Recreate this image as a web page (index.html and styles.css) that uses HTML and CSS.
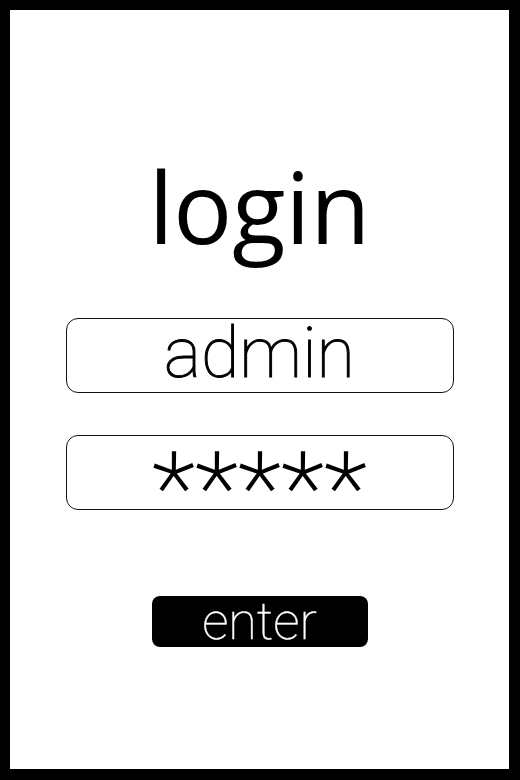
FILE: index.html
```html
<!DOCTYPE html>
<html lang="en">
<head>
    <meta charset="UTF-8">
    <meta name="viewport" content="width=device-width, initial-scale=1.0">
    <title>login</title>
    <link rel="stylesheet" href="styles.css">
</head>
<body>
    <div class="frame">
        <h1 class="title">login</h1>
        <div class="field">admin</div>
        <div class="field field-pass">*****</div>
        <button class="btn-enter">enter</button>
    </div>
</body>
</html>
```

FILE: styles.css
```css
* {
    box-sizing: border-box;
}

body {
    margin: 0;
    padding: 0;
    background-color: #fff;
    font-family: Roboto, "Noto Sans", sans-serif;
}

.frame {
    width: 520px;
    height: 780px;
    border: 10px solid #000;
    border-right-width: 11px;
    border-bottom-width: 11px;
    display: flex;
    flex-direction: column;
    align-items: center;
    padding-top: 136px;
}

.title {
    margin: 0;
    font-family: "Open Sans", sans-serif;
    font-weight: 400;
    font-size: 98px;
    line-height: 120px;
    color: #000;
}

.field {
    width: 388px;
    height: 75px;
    margin-top: 52px;
    border: 1.5px solid #111;
    border-radius: 12px;
    text-align: center;
    font-family: Roboto, sans-serif;
    font-size: 70px;
    font-weight: 100;
    -webkit-text-stroke: 1px #000;
    line-height: 68px;
    color: #000;
}

/* stars sit in the middle of the box, so the line is taller than the box */
.field-pass {
    margin-top: 42px;
    font-size: 98px;
    -webkit-text-stroke: 1.6px #000;
    letter-spacing: 2px;
    text-indent: 2px;
    line-height: 106px;
}

.btn-enter {
    margin-top: 86px;
    width: 216px;
    height: 51px;
    background-color: #000;
    color: #fff;
    border: none;
    border-radius: 8px;
    font-family: Roboto, sans-serif;
    font-weight: 100;
    font-size: 52px;
    -webkit-text-stroke: 0.4px #fff;
    line-height: 51px;
    padding: 0;
}
```
